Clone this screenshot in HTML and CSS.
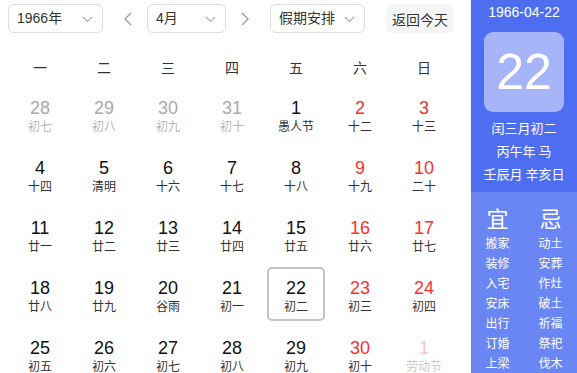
FILE: index.html
```html
<!DOCTYPE html>
<html lang="zh-CN">
<head>
    <meta charset="UTF-8">
    <title>万年历</title>
    <link rel="stylesheet" href="styles.css">
</head>
<body>
    <div class="calendar">
        <div class="main">
            <div class="toolbar">
                <div class="select select-year">1966年
                    <svg class="caret" width="11" height="7" viewBox="0 0 11 7"><path d="M1 1 L5.5 5.5 L10 1" fill="none" stroke="#aaa" stroke-width="1.1"/></svg>
                </div>
                <span class="arrow arrow-prev">
                    <svg width="8" height="14" viewBox="0 0 8 14"><path d="M7 1 L1 7 L7 13" fill="none" stroke="#999" stroke-width="1.3"/></svg>
                </span>
                <div class="select select-month">4月
                    <svg class="caret" width="11" height="7" viewBox="0 0 11 7"><path d="M1 1 L5.5 5.5 L10 1" fill="none" stroke="#aaa" stroke-width="1.1"/></svg>
                </div>
                <span class="arrow arrow-next">
                    <svg width="8" height="14" viewBox="0 0 8 14"><path d="M1 1 L7 7 L1 13" fill="none" stroke="#999" stroke-width="1.3"/></svg>
                </span>
                <div class="select select-holiday">假期安排
                    <svg class="caret" width="11" height="7" viewBox="0 0 11 7"><path d="M1 1 L5.5 5.5 L10 1" fill="none" stroke="#aaa" stroke-width="1.1"/></svg>
                </div>
                <button class="today-btn">返回今天</button>
            </div>

            <div class="weekdays">
                <span>一</span><span>二</span><span>三</span><span>四</span><span>五</span><span>六</span><span>日</span>
            </div>

            <div class="days">
                <div class="day other"><b>28</b><i>初七</i></div>
                <div class="day other"><b>29</b><i>初八</i></div>
                <div class="day other"><b>30</b><i>初九</i></div>
                <div class="day other"><b>31</b><i>初十</i></div>
                <div class="day"><b>1</b><i>愚人节</i></div>
                <div class="day weekend"><b>2</b><i>十二</i></div>
                <div class="day weekend"><b>3</b><i>十三</i></div>

                <div class="day"><b>4</b><i>十四</i></div>
                <div class="day"><b>5</b><i>清明</i></div>
                <div class="day"><b>6</b><i>十六</i></div>
                <div class="day"><b>7</b><i>十七</i></div>
                <div class="day"><b>8</b><i>十八</i></div>
                <div class="day weekend"><b>9</b><i>十九</i></div>
                <div class="day weekend"><b>10</b><i>二十</i></div>

                <div class="day"><b>11</b><i>廿一</i></div>
                <div class="day"><b>12</b><i>廿二</i></div>
                <div class="day"><b>13</b><i>廿三</i></div>
                <div class="day"><b>14</b><i>廿四</i></div>
                <div class="day"><b>15</b><i>廿五</i></div>
                <div class="day weekend"><b>16</b><i>廿六</i></div>
                <div class="day weekend"><b>17</b><i>廿七</i></div>

                <div class="day"><b>18</b><i>廿八</i></div>
                <div class="day"><b>19</b><i>廿九</i></div>
                <div class="day"><b>20</b><i>谷雨</i></div>
                <div class="day"><b>21</b><i>初一</i></div>
                <div class="day selected"><b>22</b><i>初二</i></div>
                <div class="day weekend"><b>23</b><i>初三</i></div>
                <div class="day weekend"><b>24</b><i>初四</i></div>

                <div class="day"><b>25</b><i>初五</i></div>
                <div class="day"><b>26</b><i>初六</i></div>
                <div class="day"><b>27</b><i>初七</i></div>
                <div class="day"><b>28</b><i>初八</i></div>
                <div class="day"><b>29</b><i>初九</i></div>
                <div class="day weekend"><b>30</b><i>初十</i></div>
                <div class="day other holiday"><b>1</b><i>劳动节</i></div>
            </div>
        </div>

        <div class="side">
            <div class="side-top">
                <div class="side-date">1966-04-22</div>
                <div class="big-day">22</div>
                <div class="lunar">
                    <p>闰三月初二</p>
                    <p>丙午年 马</p>
                    <p>壬辰月 辛亥日</p>
                </div>
            </div>
            <div class="almanac">
                <div class="almanac-col">
                    <h3>宜</h3>
                    <p>搬家</p><p>装修</p><p>入宅</p><p>安床</p><p>出行</p><p>订婚</p><p>上梁</p>
                </div>
                <div class="almanac-col">
                    <h3>忌</h3>
                    <p>动土</p><p>安葬</p><p>作灶</p><p>破土</p><p>祈福</p><p>祭祀</p><p>伐木</p>
                </div>
            </div>
        </div>
    </div>
</body>
</html>
```

FILE: styles.css
```css
body {
    margin: 0;
    padding: 0;
    width: 577px;
    height: 373px;
    overflow: hidden;
    background: #fff;
    font-family: 'Liberation Sans', 'Noto Sans CJK SC', sans-serif;
    color: #333;
}
.calendar {
    display: flex;
    height: 373px;
}
.main {
    width: 463px;
    padding: 4px 0 0 8px;
    border-right: 1px solid #f4f4f4;
}
.toolbar {
    display: flex;
    align-items: center;
    height: 29px;
}
.select {
    position: relative;
    height: 29px;
    box-sizing: border-box;
    border: 1px solid #dcdcdc;
    border-radius: 6px;
    padding-left: 8px;
    font-size: 14px;
    line-height: 27px;
    color: #333;
}
.select-year { width: 95px; }
.select-month { width: 79px; }
.select-holiday { width: 95px; }
.caret {
    position: absolute;
    right: 9px;
    top: 11px;
}
.arrow {
    width: 44px;
    height: 29px;
    display: flex;
    align-items: center;
    justify-content: center;
    box-sizing: border-box;
}
.arrow-prev { padding-left: 6px; }
.arrow-next { padding-right: 6px; }
.today-btn {
    margin-left: 21px;
    width: 68px;
    height: 29px;
    border: none;
    border-radius: 6px;
    background: #f5f5f6;
    font-family: 'Noto Sans CJK SC', sans-serif;
    font-size: 14px;
    color: #333;
    padding: 0;
}
.weekdays {
    display: grid;
    grid-template-columns: repeat(7, 64px);
    margin-top: 19px;
    height: 32px;
    line-height: 32px;
    text-align: center;
    font-size: 14px;
    color: #333;
}
.days {
    display: grid;
    grid-template-columns: repeat(7, 64px);
    grid-auto-rows: 60px;
}
.day {
    margin: 3px;
    padding-top: 10px;
    box-sizing: border-box;
    border: 2px solid transparent;
    border-radius: 5px;
    text-align: center;
}
.day b {
    display: block;
    font-weight: normal;
    font-size: 18px;
    line-height: 18px;
    color: #111;
}
.day i {
    display: block;
    font-style: normal;
    font-size: 12px;
    line-height: 21px;
    color: #333;
}
.day.weekend b { color: #f73131; }
.day.other b { color: #aaa; }
.day.other i { color: #b5b5b5; }
.day.holiday b { color: #fbc4c4; }
.day.holiday i { color: #c8c8c8; }
.day.selected { border-color: #c4c4c4; }
.side {
    width: 106px;
    display: flex;
    flex-direction: column;
    color: #fff;
    text-align: center;
}
.side-top {
    flex-shrink: 0;
    background: #4e6ef2;
    height: 192px;
}
.side-date {
    font-size: 14px;
    line-height: 24px;
}
.big-day {
    width: 80px;
    height: 80px;
    margin: 8px auto 0;
    background: #a6b5f8;
    border-radius: 9px;
    font-size: 50px;
    line-height: 80px;
}
.lunar {
    margin-top: 4px;
    font-family: 'Noto Sans CJK SC', sans-serif;
    font-size: 13px;
}
.lunar p {
    margin: 0;
    line-height: 23px;
}
.almanac {
    flex: 1;
    min-height: 0;
    overflow: hidden;
    background: #6a86f4;
    display: flex;
    padding-top: 12px;
}
.almanac-col {
    width: 53px;
}
.almanac-col h3 {
    margin: 0 0 3px;
    font-size: 22px;
    font-weight: normal;
    line-height: 26px;
    font-family: 'Noto Sans CJK SC', sans-serif;
}
.almanac-col p {
    margin: 0;
    font-size: 12px;
    line-height: 20px;
    font-family: 'Noto Sans CJK SC', sans-serif;
}
```
